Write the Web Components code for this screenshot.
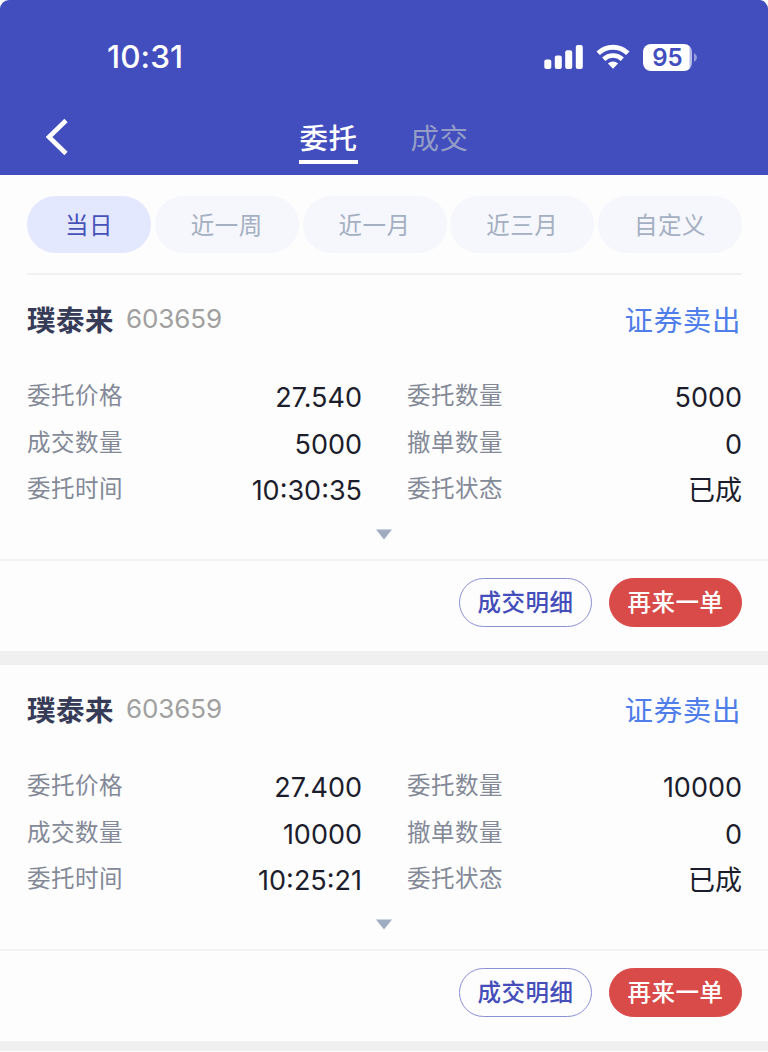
<!DOCTYPE html>
<html lang="zh-CN">
<head>
<meta charset="utf-8">
<title>委托</title>
<style>
  body {
    margin: 0;
    background: #fdfdfd;
    font-family: Inter, "Noto Sans CJK SC", sans-serif;
  }
</style>
</head>
<body>
<orders-page></orders-page>

<script>
// Status bar
class StatusBar extends HTMLElement {
  constructor() {
    super();
    this.attachShadow({ mode: 'open' });
    this.shadowRoot.innerHTML = `
      <style>
        :host {
          display: flex;
          align-items: center;
          justify-content: space-between;
          height: 40px;
          padding: 37px 71px 0 107px;
          color: #fff;
        }
        .time { font-size: 31.5px; font-weight: 500; line-height: 40px; letter-spacing: 0.1px; }
        .icons { display: flex; align-items: center; height: 40px; }
        svg { display: block; }
        .wifi { margin-left: 13px; }
        .battery { display: flex; align-items: center; margin-left: 13px; gap: 2px; }
        .level {
          box-sizing: border-box;
          width: 49px;
          height: 27px;
          border-radius: 8px;
          background: linear-gradient(90deg, #fff 46px, #b5b9e6 47px);
          color: #424dbe;
          font: 600 24px/27px Inter, sans-serif;
          text-align: center;
        }
      </style>
      <div class="time">10:31</div>
      <div class="icons">
        <svg width="39" height="26" viewBox="0 0 39 26" fill="#fff">
          <rect x="0.3" y="15.4" width="7" height="9.6" rx="2"/>
          <rect x="10.8" y="11.4" width="7" height="13.6" rx="2"/>
          <rect x="21.2" y="6.2" width="7" height="18.8" rx="2"/>
          <rect x="31.8" y="1" width="7" height="24" rx="2"/>
        </svg>
        <svg class="wifi" width="34" height="26" viewBox="0 0 34 26" fill="none" stroke="#fff" stroke-width="5">
          <path d="M2.2 9.2 A21.4 21.4 0 0 1 31.8 9.2"/>
          <path d="M7.7 15.2 A13.6 13.6 0 0 1 26.3 15.2" stroke-width="4.6"/>
          <path d="M17 24.8 L11.9 19.6 A7.5 7.5 0 0 1 22.1 19.6 Z" fill="#fff" stroke="none"/>
        </svg>
        <div class="battery">
          <div class="level">95</div>
          <svg width="3" height="9" viewBox="0 0 3 9"><path d="M0 0 Q3 1.6 3 4.5 T0 9 Z" fill="#959bdc"/></svg>
        </div>
      </div>
    `;
  }
}

// Navigation bar with the back arrow and tabs
class NavBar extends HTMLElement {
  constructor() {
    super();
    this.attachShadow({ mode: 'open' });
    this.shadowRoot.innerHTML = `
      <style>
        :host {
          display: grid;
          grid-template-columns: 1fr auto 1fr;
          height: 98px;
          padding: 0 45px;
        }
        .back { display: block; margin-top: 41px; }
        .tabs { display: flex; gap: 52px; padding-top: 40px; }
        .tab {
          box-sizing: border-box;
          width: 59px;
          height: 47px;
          padding-top: 2px;
          font-size: 28.5px;
          line-height: 40px;
          letter-spacing: 0.4px;
          text-align: center;
          white-space: nowrap;
          color: #949dc6;
        }
        .tab.active { color: #fff; font-weight: 500; border-bottom: 4px solid #fff; }
      </style>
      <svg class="back" width="24" height="38" viewBox="0 0 24 38" fill="none" stroke="#fff" stroke-width="4.6">
        <path d="M21 2.5 L4 19 L21 35.5"/>
      </svg>
      <div class="tabs">
        <div class="tab active">委托</div>
        <div class="tab">成交</div>
      </div>
    `;
  }
}

// One date range option
class RangeChip extends HTMLElement {
  constructor() {
    super();
    this.attachShadow({ mode: 'open' });
    this.shadowRoot.innerHTML = `
      <style>
        :host {
          flex: 0 0 144px;
          height: 57px;
          border-radius: 29px;
          background: #f5f7fc;
          color: #a5afc2;
          font-size: 23.5px;
          line-height: 59px;
          letter-spacing: 0.5px;
          text-align: center;
        }
        :host([active]) { flex-basis: 124px; background: #e3e8fe; color: #4850b9; }
      </style>
      <slot></slot>
    `;
  }
}

// Label and value pair
class OrderField extends HTMLElement {
  constructor() {
    super();
    this.attachShadow({ mode: 'open' });
    this.shadowRoot.innerHTML = `
      <style>
        :host { display: flex; justify-content: space-between; height: 46.7px; }
        .label { font-size: 23.5px; line-height: 45px; letter-spacing: 0.5px; color: #838997; }
        .value { font-size: 27px; line-height: 49px; color: #1c1d2c; }
      </style>
      <span class="label">${this.getAttribute('label')}</span>
      <span class="value"><slot></slot></span>
    `;
  }
}

// Rounded action button
class PillButton extends HTMLElement {
  constructor() {
    super();
    this.attachShadow({ mode: 'open' });
    this.shadowRoot.innerHTML = `
      <style>
        :host {
          display: block;
          box-sizing: border-box;
          width: 133px;
          height: 49px;
          border: 1.5px solid #8a90d4;
          border-radius: 25px;
          color: #444db9;
          font-size: 23.5px;
          font-weight: 500;
          line-height: 48px;
          letter-spacing: 0.5px;
          text-align: center;
        }
        :host([primary]) { background: #d84b49; border-color: #d84b49; color: #fff; }
      </style>
      <slot></slot>
    `;
  }
}

// Order card
class OrderCard extends HTMLElement {
  set order(order) {
    if (!this.shadowRoot) this.attachShadow({ mode: 'open' });
    this.shadowRoot.innerHTML = `
      <style>
        :host { display: block; box-sizing: border-box; height: 390px; border-bottom: 14px solid #f0f0f0; }
        :host(:last-child) { height: 386px; border-bottom-width: 10px; }
        header { display: flex; align-items: center; height: 86px; padding: 0 27px; }
        .name { font-size: 28.5px; font-weight: 700; letter-spacing: 0.5px; color: #363b57; }
        .code { font-size: 26px; color: #a0a0a0; margin-left: 12px; letter-spacing: -0.1px; }
        .side { margin-left: auto; font-size: 28.5px; letter-spacing: 0.6px; color: #4f7de9; }
        .fields {
          display: grid;
          grid-template-columns: 335px 335px;
          column-gap: 45px;
          height: 140px;
          padding: 12px 26px 0 27px;
        }
        .more { display: block; margin: 16px auto 19px; }
        footer {
          display: flex;
          justify-content: flex-end;
          gap: 17px;
          padding: 17px 26px 0;
          border-top: 2px solid #f3f3f3;
        }
      </style>
      <header>
        <span class="name">${order.name}</span>
        <span class="code">${order.code}</span>
        <span class="side">${order.side}</span>
      </header>
      <div class="fields">
        <order-field label="委托价格">${order.price}</order-field>
        <order-field label="委托数量">${order.amount}</order-field>
        <order-field label="成交数量">${order.filled}</order-field>
        <order-field label="撤单数量">${order.cancelled}</order-field>
        <order-field label="委托时间">${order.time}</order-field>
        <order-field label="委托状态">${order.status}</order-field>
      </div>
      <svg class="more" width="16" height="11" viewBox="0 0 16 11"><path d="M0 0.5 H16 L8 10.5 Z" fill="#a0acc1"/></svg>
      <footer>
        <pill-button>成交明细</pill-button>
        <pill-button primary>再来一单</pill-button>
      </footer>
    `;
  }
}

// Page
class OrdersPage extends HTMLElement {
  constructor() {
    super();
    this.attachShadow({ mode: 'open' });
    this.shadowRoot.innerHTML = `
      <style>
        :host { display: block; height: 1052px; overflow: hidden; }
        .top { height: 175px; background: #424dbe; border-radius: 9px 9px 0 0; }
        .ranges {
          display: flex;
          justify-content: space-between;
          height: 57px;
          margin: 0 26px 0 27px;
          padding: 21px 0 20px;
          border-bottom: 2px solid #f1f1f1;
        }
      </style>
      <div class="top">
        <status-bar></status-bar>
        <nav-bar></nav-bar>
      </div>
      <div class="ranges">
        <range-chip active>当日</range-chip>
        <range-chip>近一周</range-chip>
        <range-chip>近一月</range-chip>
        <range-chip>近三月</range-chip>
        <range-chip>自定义</range-chip>
      </div>
      <div class="list"></div>
    `;
    this.renderOrders([
      { name: '璞泰来', code: '603659', side: '证券卖出', price: '27.540', amount: '5000', filled: '5000', cancelled: '0', time: '10:30:35', status: '已成' },
      { name: '璞泰来', code: '603659', side: '证券卖出', price: '27.400', amount: '10000', filled: '10000', cancelled: '0', time: '10:25:21', status: '已成' }
    ]);
  }

  renderOrders(orders) {
    const list = this.shadowRoot.querySelector('.list');
    orders.forEach(order => {
      const card = document.createElement('order-card');
      card.order = order;
      list.appendChild(card);
    });
  }
}

customElements.define('status-bar', StatusBar);
customElements.define('nav-bar', NavBar);
customElements.define('range-chip', RangeChip);
customElements.define('order-field', OrderField);
customElements.define('pill-button', PillButton);
customElements.define('order-card', OrderCard);
customElements.define('orders-page', OrdersPage);
</script>
</body>
</html>
